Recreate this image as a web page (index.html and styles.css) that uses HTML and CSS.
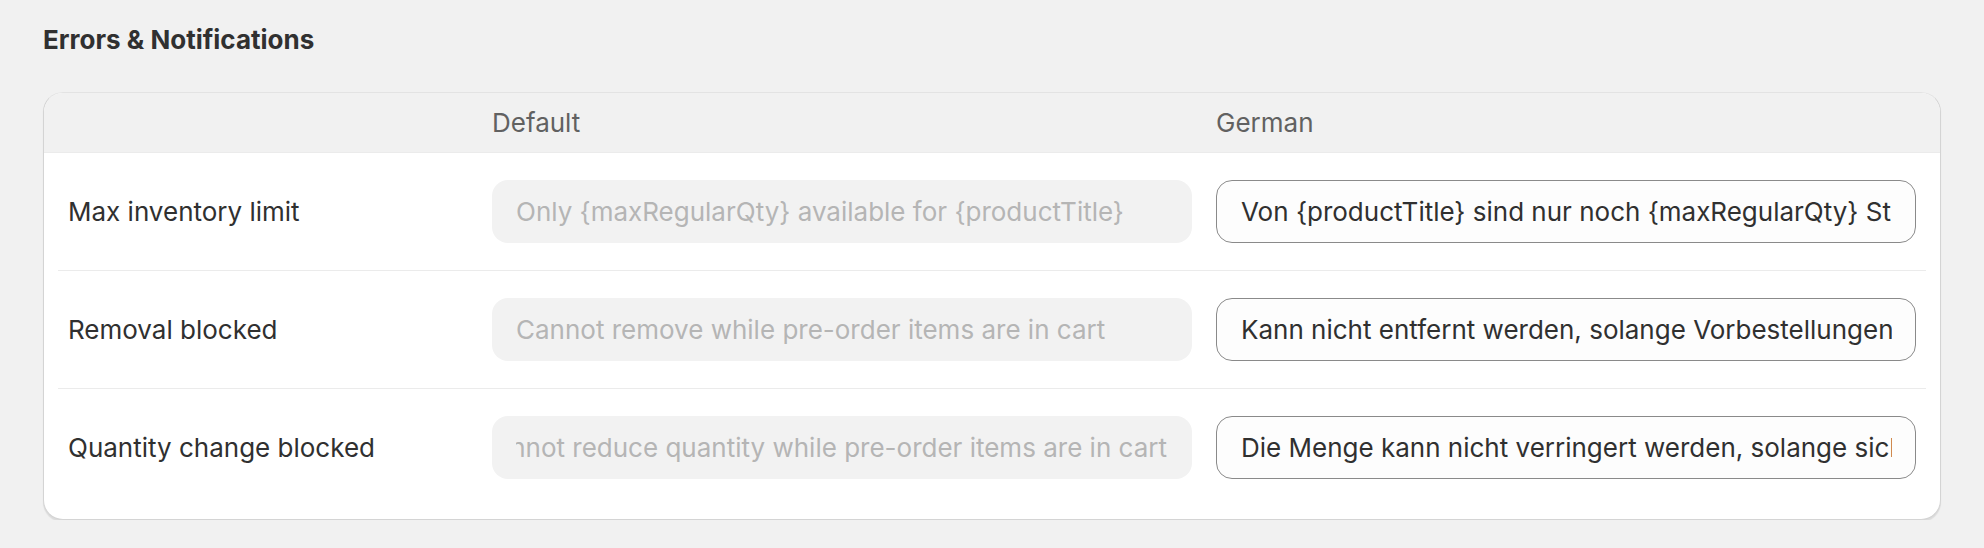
FILE: index.html
```html
<!DOCTYPE html>
<html lang="en">
<head>
<meta charset="utf-8">
<title>Errors &amp; Notifications</title>
<link rel="stylesheet" href="styles.css">
</head>
<body>
<main class="page">
  <h2 class="title">Errors &amp; Notifications</h2>
  <section class="card">
    <div class="head grid">
      <div></div>
      <div class="head-cell">Default</div>
      <div class="head-cell">German</div>
    </div>
    <div class="body">
      <div class="row grid">
        <div class="label">Max inventory limit</div>
        <div class="field field-default"><div class="clip"><span>Only {maxRegularQty} available for {productTitle}</span></div></div>
        <div class="field field-edit"><div class="clip clip-start"><span>Von {productTitle} sind nur noch {maxRegularQty} Stück verfügbar</span></div></div>
      </div>
      <div class="row grid">
        <div class="label">Removal blocked</div>
        <div class="field field-default"><div class="clip"><span>Cannot remove while pre-order items are in cart</span></div></div>
        <div class="field field-edit"><div class="clip clip-start"><span>Kann nicht entfernt werden, solange Vorbestellungen im Warenkorb sind</span></div></div>
      </div>
      <div class="row grid">
        <div class="label">Quantity change blocked</div>
        <div class="field field-default"><div class="clip clip-end"><span>Cannot reduce quantity while pre-order items are in cart</span></div></div>
        <div class="field field-edit"><div class="clip clip-start"><span>Die Menge kann nicht verringert werden, solange sich Vorbestellungen im Warenkorb befinden</span></div></div>
      </div>
    </div>
  </section>
</main>
</body>
</html>
```

FILE: styles.css
```css
html, body {
  margin: 0;
  padding: 0;
  background: #f1f1f1;
}

body {
  font-family: Inter, "Noto Sans", "Liberation Sans", sans-serif;
  color: #303030;
  font-size: 26px;
}

.page {
  padding: 22px 43px 0 43px;
}

.title {
  margin: 0 0 34px 0;
  font-size: 26px;
  line-height: 36px;
  font-weight: 650;
  color: #303030;
}

.card {
  background: #ffffff;
  border: 1px solid #d4d4d4;
  border-top-color: #e3e3e3;
  border-radius: 20px;
  box-shadow: 0 2px 1px rgba(26, 26, 26, 0.1);
  overflow: hidden;
}

.grid {
  display: grid;
  grid-template-columns: 400px 1fr 1fr;
  column-gap: 24px;
  align-items: center;
}

.head {
  height: 59px;
  padding: 0 24px;
  background: #f1f1f1;
  border-bottom: 1px solid #ebebeb;
}

.head-cell {
  line-height: 40px;
  color: #616161;
  font-weight: 400;
}

.body {
  padding: 0 14px 13px 14px;
}

.row {
  padding: 27px 10px;
  border-bottom: 1px solid #ebebeb;
}

.row:last-child {
  border-bottom: none;
}

.label {
  line-height: 40px;
  color: #303030;
  font-weight: 400;
}

.field {
  box-sizing: border-box;
  height: 63px;
  border-radius: 16px;
  display: flex;
  align-items: center;
  padding: 0 25px 0 24px;
  min-width: 0;
}

.field-default {
  background: #f2f2f2;
  color: #b5b5b5;
}

.field-edit {
  background: #fdfdfd;
  border: 1px solid #8a8a8a;
  color: #303030;
  padding: 0 23px 0 24px;
}

.clip {
  display: flex;
  width: 100%;
  overflow: hidden;
  white-space: nowrap;
  line-height: 40px;
}

.clip-start {
  justify-content: flex-start;
}

.clip-end {
  justify-content: flex-end;
}

.clip span {
  flex: none;
}
```
